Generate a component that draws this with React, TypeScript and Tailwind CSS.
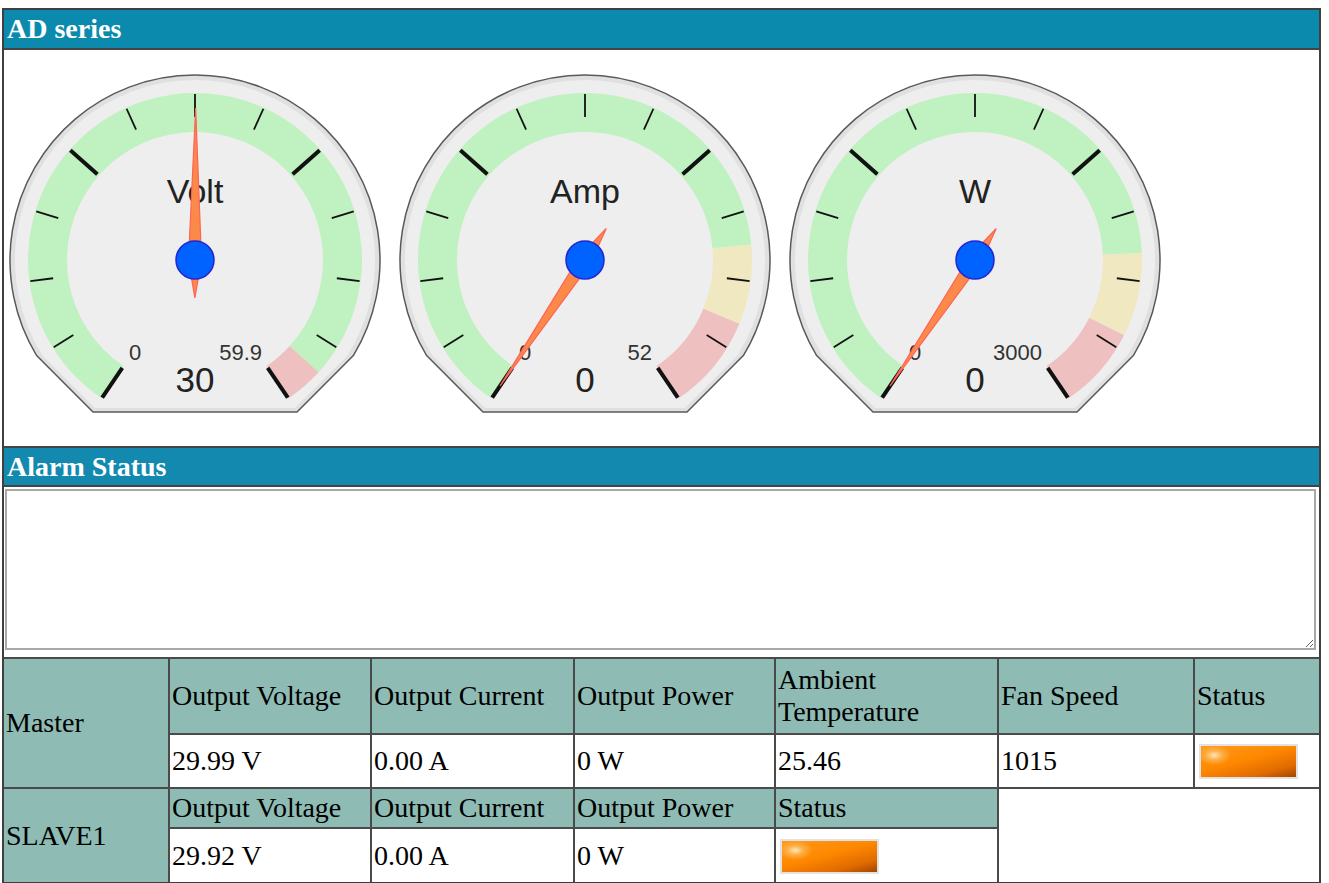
import React from 'react';

const START = -146;
const SWEEP = 292;

function pt(r: number, deg: number) {
  const a = (deg * Math.PI) / 180;
  return [r * Math.sin(a), -r * Math.cos(a)];
}

function bandPath(f1: number, f2: number, r1: number, r2: number) {
  const a1 = START + SWEEP * f1;
  const a2 = START + SWEEP * f2;
  const large = a2 - a1 > 180 ? 1 : 0;
  const [x1, y1] = pt(r2, a1);
  const [x2, y2] = pt(r2, a2);
  const [x3, y3] = pt(r1, a2);
  const [x4, y4] = pt(r1, a1);
  return `M${x1} ${y1} A${r2} ${r2} 0 ${large} 1 ${x2} ${y2} L${x3} ${y3} A${r1} ${r1} 0 ${large} 0 ${x4} ${y4}Z`;
}

// round dial cut off at the bottom by two 45deg chamfers and a flat edge
function bodyPath(R: number, b: number, h: number) {
  const k = h - b;
  const c = h * h + b * b - R * R;
  const t = (-2 * k + Math.sqrt(4 * k * k - 8 * c)) / 4;
  const px = h + t;
  const py = b - t;
  return `M${-px} ${py} A${R} ${R} 0 1 1 ${px} ${py} L${h} ${b} L${-h} ${b}Z`;
}

type Zone = { from: number; to: number; color: string };

function Gauge({ label, min, max, value, shown, zones }: { label: string; min: string; max: string; value: number; shown: string; zones: Zone[] }) {
  const angle = START + SWEEP * value;
  const ticks = Array.from({ length: 13 }, (_, i) => i);
  return (
    <svg width={372} height={342} viewBox="-186 -186 372 342" className="shrink-0">
      <path d={bodyPath(185, 152, 102)} fill="#e0e0e0" stroke="#5a5a5a" strokeWidth={1.5} />
      <path d={bodyPath(180, 148, 100)} fill="#eeeeee" />
      {zones.map((z, i) => (
        <path key={i} d={bandPath(z.from, z.to, 128, 167)} fill={z.color} />
      ))}
      {ticks.map((i) => {
        const major = i % 4 === 0;
        const a = START + (SWEEP / 12) * i;
        const [x1, y1] = pt(major ? 130 : 143, a);
        const [x2, y2] = pt(166, a);
        return <line key={i} x1={x1} y1={y1} x2={x2} y2={y2} stroke="#111" strokeWidth={major ? 4 : 1.8} />;
      })}
      <g fontFamily="'Liberation Sans', Arial, sans-serif" fill="#222">
        <text x={0} y={-57} fontSize={34} textAnchor="middle">{label}</text>
        <text x={-66} y={100} fontSize={22} fill="#333">{min}</text>
        <text x={67} y={100} fontSize={22} fill="#333" textAnchor="end">{max}</text>
        <text x={0} y={132} fontSize={35} textAnchor="middle">{shown}</text>
      </g>
      <g transform={`rotate(${angle})`}>
        <polygon points="0,-152 6.5,0 0,38 -6.5,0" fill="#fb8a48" stroke="#ff6258" strokeWidth={1.2} />
      </g>
      <circle cx={0} cy={0} r={19} fill="#0062ff" stroke="#2424d0" strokeWidth={1.5} />
    </svg>
  );
}

function StatusLamp() {
  return (
    <span className="inline-block align-middle ml-[2px] w-[99px] h-[35px] border-2 border-[#e2e2e2] bg-[radial-gradient(ellipse_18%_32%_at_14%_30%,#ffe8bc_0%,rgba(255,196,110,0.6)_45%,rgba(255,140,0,0)_100%),linear-gradient(165deg,#ff9a1c_0%,#ff8800_45%,#e06a00_78%,#a44400_100%)]" />
  );
}

const cell = 'border-2 border-[#4a4a4a] px-[2px] py-0';
const head = `${cell} bg-[#8ebcb4]`;

export default function App() {
  return (
    <div className="min-h-screen bg-white pt-[8px] pl-[2px] font-['Liberation_Serif',serif] text-black">
      <div className="w-[1319px] border-2 border-[#3f3f3f] bg-white">
        <div className="h-[40px] bg-[#0b8aae] border-b-2 border-[#444] pl-[3px] text-[28px] leading-[38px] font-bold text-white">
          AD series
        </div>

        <div className="h-[396px] flex items-start pt-[24px] pl-[5px] gap-[18px]">
          <Gauge
            label="Volt" min="0" max="59.9" value={30 / 59.9} shown="30"
            zones={[
              { from: 0, to: 0.953, color: '#c0f1c0' },
              { from: 0.953, to: 1, color: '#efc0c0' },
            ]}
          />
          <Gauge
            label="Amp" min="0" max="52" value={0} shown="0"
            zones={[
              { from: 0, to: 0.79, color: '#c0f1c0' },
              { from: 0.79, to: 0.885, color: '#f0e8c0' },
              { from: 0.885, to: 1, color: '#efc0c0' },
            ]}
          />
          <Gauge
            label="W" min="0" max="3000" value={0} shown="0"
            zones={[
              { from: 0, to: 0.8, color: '#c0f1c0' },
              { from: 0.8, to: 0.9, color: '#f0e8c0' },
              { from: 0.9, to: 1, color: '#efc0c0' },
            ]}
          />
        </div>

        <div className="h-[41px] bg-[#1389af] border-y-2 border-[#444] pl-[3px] text-[28px] leading-[37px] font-bold text-white">
          Alarm Status
        </div>

        <div className="h-[170px] pt-[2px] pl-[1px]">
          <textarea className="block w-[1311px] h-[161px] border-2 border-[#a8a8a8] bg-white" />
        </div>

        <table className="w-full table-fixed border-collapse text-[28px] leading-[32px]">
          <colgroup>
            <col className="w-[165px]" />
            <col className="w-[202px]" />
            <col className="w-[203px]" />
            <col className="w-[201px]" />
            <col className="w-[223px]" />
            <col className="w-[196px]" />
            <col />
          </colgroup>
          <tbody>
            <tr className="h-[76px]">
              <td rowSpan={2} className={`${head} border-l-0`}>Master</td>
              <td className={head}>Output Voltage</td>
              <td className={head}>Output Current</td>
              <td className={head}>Output Power</td>
              <td className={head}>Ambient Temperature</td>
              <td className={head}>Fan Speed</td>
              <td className={`${head} border-r-0`}>Status</td>
            </tr>
            <tr className="h-[54px]">
              <td className={cell}>29.99 V</td>
              <td className={cell}>0.00 A</td>
              <td className={cell}>0 W</td>
              <td className={cell}>25.46</td>
              <td className={cell}>1015</td>
              <td className={`${cell} border-r-0`}><StatusLamp /></td>
            </tr>
            <tr className="h-[40px]">
              <td rowSpan={2} className={`${head} border-l-0 border-b-0`}>SLAVE1</td>
              <td className={head}>Output Voltage</td>
              <td className={head}>Output Current</td>
              <td className={head}>Output Power</td>
              <td className={head}>Status</td>
              <td colSpan={2} rowSpan={2} className="border-0" />
            </tr>
            <tr className="h-[54px]">
              <td className={`${cell} border-b-0`}>29.92 V</td>
              <td className={`${cell} border-b-0`}>0.00 A</td>
              <td className={`${cell} border-b-0`}>0 W</td>
              <td className={`${cell} border-b-0`}><StatusLamp /></td>
            </tr>
          </tbody>
        </table>
      </div>
    </div>
  );
}
